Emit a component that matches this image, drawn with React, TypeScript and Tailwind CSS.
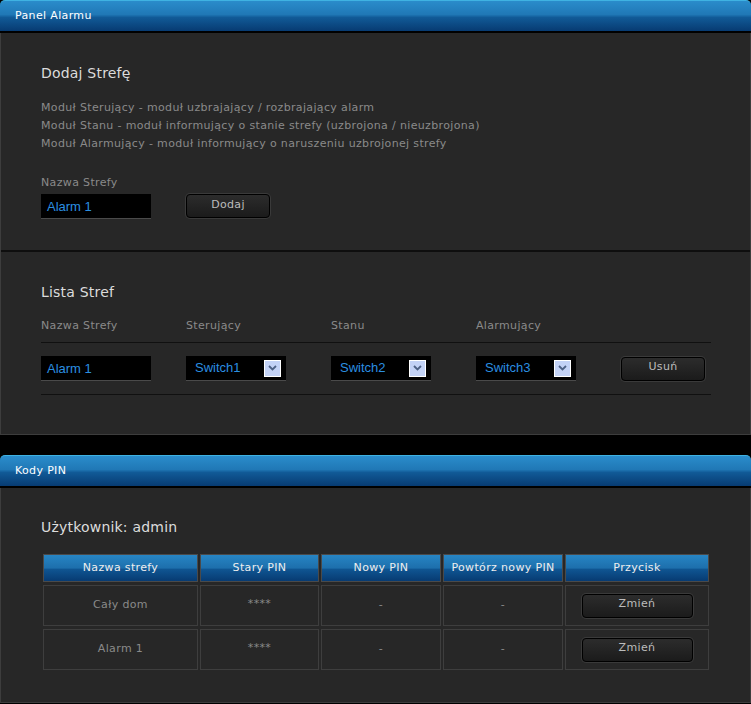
import React from "react";

const font = "font-['DejaVu_Sans',Verdana,sans-serif]";
const small = "text-[11px] tracking-[0.35px]";
const heading = "text-[14px] leading-[18px] tracking-[0.2px] text-[#dcdcdc]";
const blueBar =
  "bg-[linear-gradient(to_bottom,#2a8ccb_0%,#2078b6_45%,#115a97_55%,#073b72_100%)] border-t border-[#3fb2e2]";

function PanelHeader({ title }: { title: string }) {
  return (
    <div className={`h-[33px] rounded-t-[5px] ${blueBar} flex items-center pl-[15px] ${small} text-white border-b-2 border-b-black`}>
      {title}
    </div>
  );
}

function DarkButton({ label, w }: { label: string; w: string }) {
  return (
    <button
      className={`${w} h-[24px] rounded-[4px] border border-black bg-[linear-gradient(to_bottom,#2c2c2c,#1b1b1b)] shadow-[0_0_0_1px_#3a3a3a] ${small} text-[#bcbcbc] flex items-center justify-center pb-[2px]`}
    >
      {label}
    </button>
  );
}

function TextBox({ value }: { value: string }) {
  return (
    <div className="w-[110px] h-[25px] bg-black border-b border-[#4a4a4a] flex items-center pl-[6px] pt-[2px] font-['Liberation_Sans',Arial,sans-serif] text-[13px] text-[#2b8fe0]">
      {value}
    </div>
  );
}

function SelectBox({ value }: { value: string }) {
  return (
    <div className="w-[100px] h-[25px] bg-black border-b border-[#4a4a4a] flex items-center justify-between pl-[9px] pr-[5px] font-['Liberation_Sans',Arial,sans-serif] text-[13px] text-[#2b8fe0]">
      <span>{value}</span>
      <span className="w-[17px] h-[17px] bg-[#c3d2f6] border border-white flex items-center justify-center">
        <svg width="9" height="6" viewBox="0 0 9 6">
          <path d="M1 1 L4.5 4.5 L8 1" stroke="#4d6185" strokeWidth="1.8" fill="none" />
        </svg>
      </span>
    </div>
  );
}

const rows = [
  { name: "Cały dom" },
  { name: "Alarm 1" },
];

export default function App() {
  return (
    <div className={`w-[751px] min-h-[704px] bg-black ${font}`}>
      {/* Panel Alarmu */}
      <PanelHeader title="Panel Alarmu" />
      <div className="bg-[#272727] border-x border-b border-[#3d3d3d]">
        {/* Dodaj Strefę */}
        <div className="px-[40px] pt-[31px] h-[217px]">
          <h2 className={heading}>Dodaj Strefę</h2>
          <div className={`mt-[17px] ${small} leading-[18px] text-[#8a8a8a]`}>
            <p>Moduł Sterujący - moduł uzbrajający / rozbrajający alarm</p>
            <p>Moduł Stanu - moduł informujący o stanie strefy (uzbrojona / nieuzbrojona)</p>
            <p>Moduł Alarmujący - moduł informujący o naruszeniu uzbrojonej strefy</p>
          </div>
          <p className={`mt-[23px] ${small} leading-[14px] text-[#8a8a8a]`}>Nazwa Strefy</p>
          <div className="mt-[4px] flex gap-[35px]">
            <TextBox value="Alarm 1" />
            <DarkButton label="Dodaj" w="w-[84px]" />
          </div>
        </div>
        <div className="h-[2px] bg-[#0e0e0e]" />

        {/* Lista Stref */}
        <div className="px-[40px] pt-[31px] pb-[39px]">
          <h2 className={heading}>Lista Stref</h2>
          <div className={`mt-[18px] grid grid-cols-[145px_145px_145px_145px] ${small} leading-[14px] text-[#8a8a8a]`}>
            <span>Nazwa Strefy</span>
            <span>Sterujący</span>
            <span>Stanu</span>
            <span>Alarmujący</span>
          </div>
          <div className="mt-[9px] w-[670px] h-px bg-[#101010]" />
          <div className="mt-[13px] flex items-center">
            <div className="w-[145px]"><TextBox value="Alarm 1" /></div>
            <div className="w-[145px]"><SelectBox value="Switch1" /></div>
            <div className="w-[145px]"><SelectBox value="Switch2" /></div>
            <div className="w-[145px]"><SelectBox value="Switch3" /></div>
            <DarkButton label="Usuń" w="w-[84px]" />
          </div>
          <div className="mt-[13px] w-[670px] h-px bg-[#101010]" />
        </div>
      </div>

      <div className="h-[20px]" />

      {/* Kody PIN */}
      <PanelHeader title="Kody PIN" />
      <div className="bg-[#272727] border-x border-b border-[#3d3d3d] px-[40px] pt-[30px] pb-[32px]">
        <h2 className={heading}>Użytkownik: admin</h2>
        <div className={`mt-[18px] ml-[2px] grid grid-cols-[155px_119px_120px_120px_144px] gap-x-[2px] gap-y-[3px] ${small}`}>
          {["Nazwa strefy", "Stary PIN", "Nowy PIN", "Powtórz nowy PIN", "Przycisk"].map((h) => (
            <div
              key={h}
              className="h-[28px] bg-[linear-gradient(to_bottom,#2785c4_0%,#1d6fac_50%,#0f5592_55%,#073b72_100%)] border border-[#4a4a4a] flex items-center justify-center text-[#eeeeee]"
            >
              {h}
            </div>
          ))}
          {rows.map((r) => (
            <React.Fragment key={r.name}>
              <div className="h-[41px] border border-[#3e3e3e] flex items-center justify-center text-[#8a8a8a]">{r.name}</div>
              <div className="h-[41px] border border-[#3e3e3e] flex items-center justify-center text-[#8a8a8a] pb-[2px]">****</div>
              <div className="h-[41px] border border-[#3e3e3e] flex items-center justify-center text-[#8a8a8a]">-</div>
              <div className="h-[41px] border border-[#3e3e3e] flex items-center justify-center text-[#8a8a8a]">-</div>
              <div className="h-[41px] border border-[#3e3e3e] flex items-center justify-center">
                <DarkButton label="Zmień" w="w-[111px]" />
              </div>
            </React.Fragment>
          ))}
        </div>
      </div>
    </div>
  );
}
